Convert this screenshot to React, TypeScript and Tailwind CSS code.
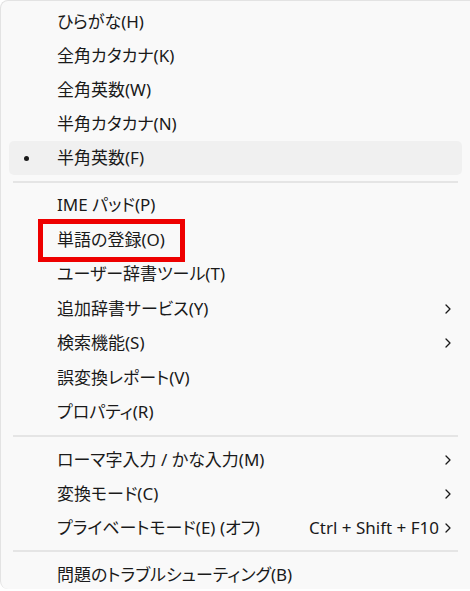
import React from "react"

type Item = {
  label: string
  shortcut?: string
  sub?: boolean
  checked?: boolean
  boxed?: boolean
}

const groups: Item[][] = [
  [
    { label: "ひらがな(H)" },
    { label: "全角カタカナ(K)" },
    { label: "全角英数(W)" },
    { label: "半角カタカナ(N)" },
    { label: "半角英数(F)", checked: true },
  ],
  [
    { label: "IME パッド(P)" },
    { label: "単語の登録(O)", boxed: true },
    { label: "ユーザー辞書ツール(T)" },
    { label: "追加辞書サービス(Y)", sub: true },
    { label: "検索機能(S)", sub: true },
    { label: "誤変換レポート(V)" },
    { label: "プロパティ(R)" },
  ],
  [
    { label: "ローマ字入力 / かな入力(M)", sub: true },
    { label: "変換モード(C)", sub: true },
    { label: "プライベートモード(E) (オフ)", shortcut: "Ctrl + Shift + F10", sub: true },
  ],
  [{ label: "問題のトラブルシューティング(B)" }],
]

function Chevron() {
  return (
    <svg className="w-[8px] h-[10px]" viewBox="0 0 8 10" fill="none" stroke="#1a1a1a" strokeWidth={1.3}>
      <path d="M2 1l4 4-4 4" strokeLinecap="round" strokeLinejoin="round" />
    </svg>
  )
}

function Row({ item, tall }: { item: Item; tall: boolean }) {
  return (
    <div
      className={
        "relative flex items-center mx-[8px] rounded-[5px] " +
        (tall ? "h-[34.5px] " : "h-[34px] ") +
        (item.checked ? "bg-[#f0f0f0]" : "")
      }
    >
      <div className="w-[48px] flex justify-center">
        {item.checked && <span className="block w-[5px] h-[5px] rounded-full bg-[#1a1a1a] -ml-[14px]" />}
      </div>
      <span className="flex-1 whitespace-nowrap">{item.label}</span>
      {item.shortcut && <span className="mr-[5px] whitespace-nowrap">{item.shortcut}</span>}
      <div className="w-[18px] flex justify-start">{item.sub && <Chevron />}</div>
      {item.boxed && (
        <div className="absolute left-[29px] top-[-4px] w-[147px] h-[43px] border-[5px] border-[#ee0000]" />
      )}
    </div>
  )
}

export default function App() {
  return (
    <div className="w-[470px] h-[591px] bg-white overflow-hidden">
      <div
        className="h-[589px] bg-[#f9f9f9] border-l border-t border-[#e3e3e3] rounded-tl-[8px] rounded-bl-[8px] pt-[4px] text-[17px] leading-[24px] text-[#1a1a1a] [font-feature-settings:'palt']"
        style={{ fontFamily: '"Noto Sans", "Noto Sans CJK JP", sans-serif' }}
      >
        {groups.map((group, gi) => (
          <div key={gi}>
            {gi > 0 && (
              <div className="h-[13px] flex items-center px-[12px]">
                <div className="h-[2px] w-full bg-[#e5e5e5]" />
              </div>
            )}
            {group.map((item) => (
              <Row key={item.label} item={item} tall={gi === 1} />
            ))}
          </div>
        ))}
      </div>
    </div>
  )
}
